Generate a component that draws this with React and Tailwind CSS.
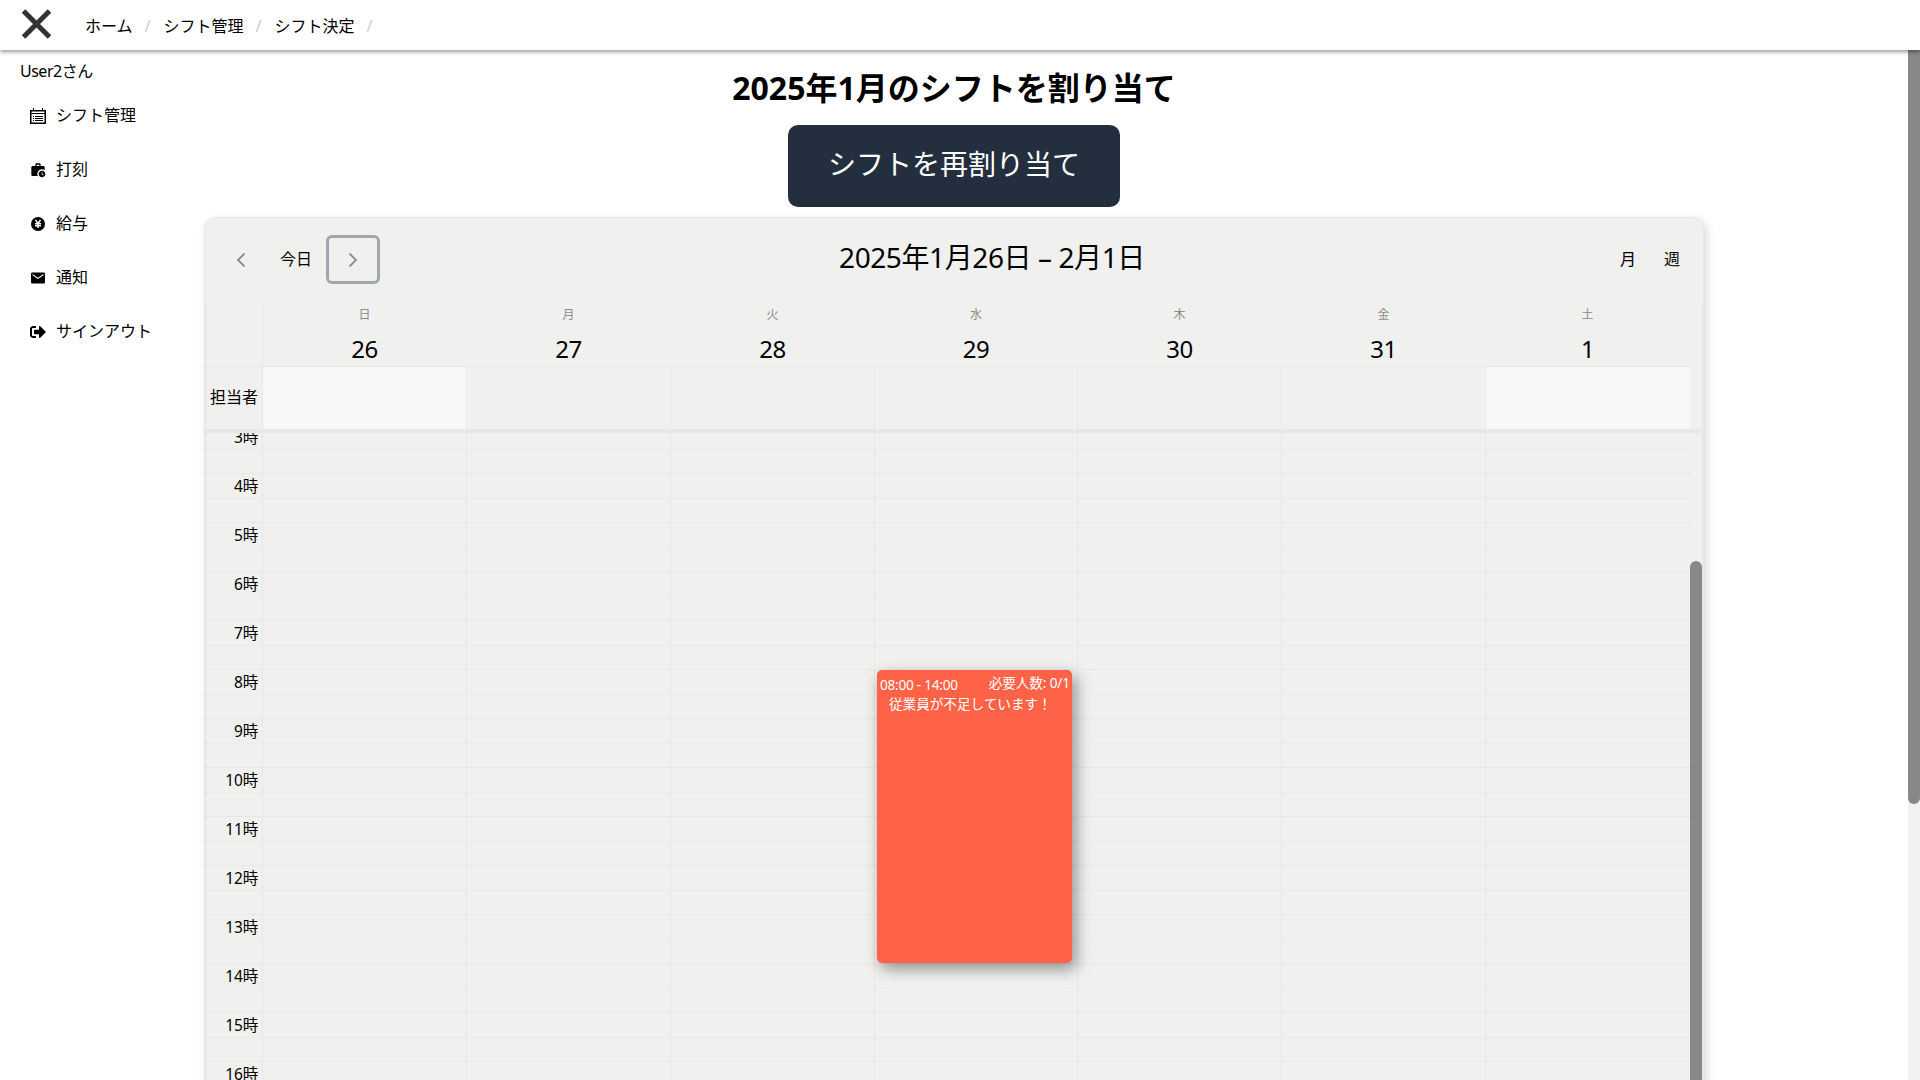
import React from "react";
import { MdWorkHistory } from "react-icons/md";
import { IoMdMail } from "react-icons/io";
import { FaSignOutAlt } from "react-icons/fa";

const days = [["日", "26"], ["月", "27"], ["火", "28"], ["水", "29"], ["木", "30"], ["金", "31"], ["土", "1"]];
const hours = [3, 4, 5, 6, 7, 8, 9, 10, 11, 12, 13, 14, 15, 16];
const cols = "grid grid-cols-[57px_204px_204px_204px_203px_204px_204px_204px]";
const line = "border-[#e7e7e5]";

function CalendarIcon() {
  return (
    <svg width="16" height="16" viewBox="0 0 16 16" fill="none" stroke="black">
      <path d="M.75 2.750h14.500v12.500H.75z" strokeWidth="1.500" />
      <path d="M1 5.500h14M3.500 0v3M12.500 0v3" />
      <path d="M5 8.500h8M5 10.500h8M5 12.500h8M3 8.500h1M3 10.500h1M3 12.500h1" />
    </svg>
  );
}

function YenIcon() {
  return (
    <svg width="14" height="14" viewBox="0 0 14 14">
      <circle cx="7" cy="7" r="7" fill="black" />
      <path d="M4.500 3 7 6.500 9.500 3M4 6.800h6M4 8.800h6M7 6.500v4.500" fill="none" stroke="white" strokeWidth="1.400" />
    </svg>
  );
}

const nav = [
  ["シフト管理", <CalendarIcon />],
  ["打刻", <MdWorkHistory size={16} />],
  ["給与", <YenIcon />],
  ["通知", <IoMdMail size={16} />],
  ["サインアウト", <FaSignOutAlt size={16} />],
];

function Header() {
  return (
    <header className="relative z-10 flex h-[50px] items-center bg-white shadow-[0_2px_4px_rgba(0,0,0,0.4)]">
      <svg className="ml-[21px] mt-[-2px] shrink-0" width="31" height="30" viewBox="0 0 31 30">
        <path d="M2.500 2 28.500 28M28.500 2 2.500 28" stroke="#333" strokeWidth="5" />
      </svg>
      <nav className="ml-[33px] mt-0.5 flex text-[16px]">
        {["ホーム", "シフト管理", "シフト決定"].map((t) => (
          <span key={t} className="flex">
            <span>{t}</span>
            <span className="w-[31px] pr-px text-center text-[#ccc]">/</span>
          </span>
        ))}
      </nav>
    </header>
  );
}

function Sidebar() {
  return (
    <aside className="w-[204px] shrink-0">
      <p className="ml-5 mt-[9px] h-6 text-[16px] leading-6 tracking-[-0.500px]">User2さん</p>
      <ul className="mt-[5px] ml-[29px]">
        {nav.map(([t, icon]) => (
          <li key={t} className="flex h-[54px] items-center text-[16px]">
            <span className="mt-0.5 flex w-[18px] justify-center">{icon}</span>
            <span className="-mt-px ml-[9px]">{t}</span>
          </li>
        ))}
      </ul>
    </aside>
  );
}

function ShiftEvent() {
  return (
    <div className="absolute left-[672px] top-[237px] h-[293px] w-[195px] whitespace-nowrap rounded-[5px] bg-[#ff6347] pt-[3px] text-[13.6px] text-white shadow-[4px_6px_15px_rgba(0,0,0,0.4)]">
      <div className="flex justify-between pl-[3px] pr-[2px] leading-[20px]">
        <span className="mt-[2px] tracking-[-0.250px]">08:00 - 14:00</span>
        <span className="tracking-[-0.100px]">必要人数: 0/1</span>
      </div>
      <p className="-mt-[1px] pl-3 leading-[20px]">従業員が不足しています！</p>
    </div>
  );
}

function Calendar() {
  return (
    <section className="flex h-[1100px] w-[1500px] flex-col rounded-t-[12px] border border-[#e7e7e5] bg-[#f0f0ee] shadow-[3px_3px_10px_rgba(0,0,0,0.15)]">
      <div className="flex h-[86px] shrink-0 items-center">
        <svg className="ml-[31px] -mt-[3px]" width="10" height="16" viewBox="0 0 10 16" fill="none" stroke="#8c8c8b" strokeWidth="1.800"><path d="M8.500 1.500 2 8l6.500 6.500" /></svg>
        <span className="-mt-1 ml-[34px] text-[16px]">今日</span>
        <button className="ml-[14px] mt-[-4px] flex h-[49px] w-[54px] items-center justify-center rounded-[6px] border-[3px] border-[#9fa6ad]">
          <svg className="mt-px" width="10" height="16" viewBox="0 0 10 16" fill="none" stroke="#8c8c8b" strokeWidth="1.800"><path d="M1.500 1.500 8 8l-6.500 6.500" /></svg>
        </button>
        <h2 className="ml-[459px] -mt-2 w-[306px] whitespace-nowrap text-[28px] tracking-[-0.400px]">2025年1月26日 – 2月1日</h2>
        <span className="-mt-1 ml-[475px] text-[16px]">月</span>
        <span className="-mt-1 ml-7 text-[16px]">週</span>
      </div>
      <div className="flex shrink-0">
        <div className={"w-[1485px] overflow-hidden border-l " + line}>
          <div className={cols + " h-[63px] border-b " + line}>
            <div className={"border-r " + line} />
            {days.map(([d, n]) => (
              <div key={n} className="flex flex-col items-center pr-px">
                <span className="mt-px h-[22px] text-[12px] leading-[20px] text-[#8c8c8b]">{d}</span>
                <span className="mt-[7px] text-[24px] leading-[30px] tracking-[-0.500px]">{n}</span>
              </div>
            ))}
          </div>
          <div className={cols + " h-[62px]"}>
            <div className={"flex items-center justify-end border-r pb-[2px] pr-1 text-[16px] " + line}>担当者</div>
            {days.map(([d]) => (
              <div key={d} className={(d === "日" || d === "土" ? "bg-[#f7f7f5] " : "") + (d === "土" ? "" : "border-r ") + line} />
            ))}
          </div>
        </div>
        <div className={"w-[13px] border-r bg-[#f0f0f0] " + line} />
      </div>
      <div className="h-1 shrink-0 bg-[#e7e7e5]" />
      <div className="relative flex flex-1 overflow-hidden">
        <div className={"w-[1485px] overflow-hidden border-l " + line}>
          <div className="-mt-[9px]">
            {hours.map((h) => (
              <div key={h} className={cols + " h-[49px]"}>
                <div className={"border-r " + line}>
                  <div className={"flex h-[25px] items-center justify-end border-t pr-1 text-[15.5px] leading-[24px] tracking-[-0.200px] " + line}>{h}時</div>
                  <div className={"h-6 border-t border-dotted " + line} />
                </div>
                {days.map(([d]) => (
                  <div key={d} className={(d === "土" ? "" : "border-r ") + line}>
                    <div className={"h-[25px] border-t " + line} />
                    <div className={"h-6 border-t border-dotted " + line} />
                  </div>
                ))}
              </div>
            ))}
          </div>
        </div>
        <div className={"w-[13px] border-r bg-[#f0f0f0] pt-[128px] " + line}>
          <div className="h-full rounded-t-full bg-[#888]" />
        </div>
        <ShiftEvent />
      </div>
    </section>
  );
}

export default function App() {
  return (
    <div className="h-[1080px] w-[1920px] overflow-hidden bg-white text-black" style={{ fontFamily: '"Noto Sans", "Noto Sans CJK JP", sans-serif' }}>
      <Header />
      <div className="flex h-[1030px]">
        <Sidebar />
        <main className="flex w-[1500px] shrink-0 flex-col items-center">
          <h1 className="mt-[14px] flex h-12 items-center whitespace-nowrap text-[32px] font-bold">2025年1月のシフトを割り当て</h1>
          <button className="mt-[13px] h-[82px] w-[332px] shrink-0 rounded-[10px] bg-[#232f3e] pb-1 text-[28px] text-white">シフトを再割り当て</button>
          <div className="h-[10px] shrink-0" />
          <Calendar />
        </main>
        <div className="ml-auto w-3 bg-[#f1f1f1]">
          <div className="h-[754px] rounded-b-full bg-[#888]" />
        </div>
      </div>
    </div>
  );
}
